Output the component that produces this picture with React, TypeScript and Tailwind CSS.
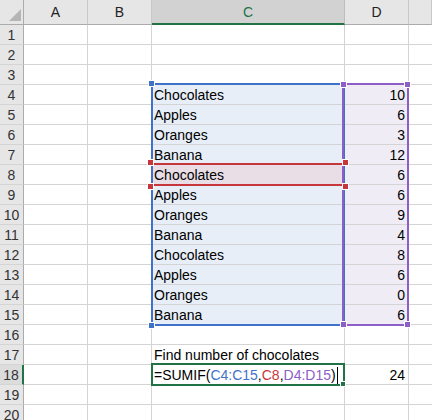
const cols = ["A", "B", "C", "D", ""];
const colW = ["w-[64px]", "w-[64px]", "w-[193px]", "w-[64px]", "flex-1"];

type Cell = { c?: string; d?: string };

const data: Record<number, Cell> = {
  4: { c: "Chocolates", d: "10" },
  5: { c: "Apples", d: "6" },
  6: { c: "Oranges", d: "3" },
  7: { c: "Banana", d: "12" },
  8: { c: "Chocolates", d: "6" },
  9: { c: "Apples", d: "6" },
  10: { c: "Oranges", d: "9" },
  11: { c: "Banana", d: "4" },
  12: { c: "Chocolates", d: "8" },
  13: { c: "Apples", d: "6" },
  14: { c: "Oranges", d: "0" },
  15: { c: "Banana", d: "6" },
  17: { c: "Find number of chocolates" },
  18: { d: "24" },
};

const rows = Array.from({ length: 20 }, (_, i) => i + 1);

// corner squares of a reference box, drawn over its border
function Corners({ color }: { color: string }) {
  const base = "absolute h-[7px] w-[7px] border border-white";
  return (
    <>
      <div className={`${base} -left-[4px] -top-[4px]`} style={{ background: color }} />
      <div className={`${base} -right-[4px] -top-[4px]`} style={{ background: color }} />
      <div className={`${base} -left-[4px] -bottom-[4px]`} style={{ background: color }} />
      <div className={`${base} -right-[4px] -bottom-[4px]`} style={{ background: color }} />
    </>
  );
}

function Formula() {
  return (
    <span className="flex items-center">
      =SUMIF(
      <span className="text-[#3f72c9]">C4:C15</span>,
      <span className="text-[#c8363d]">C8</span>,
      <span className="text-[#8e5ec8]">D4:D15</span>)
      <span className="ml-[1px] inline-block h-[17px] w-px bg-black" />
    </span>
  );
}

export default function App() {
  return (
    <div className="relative h-[420px] w-[432px] overflow-hidden bg-white font-['Liberation_Sans',Arial,sans-serif] text-[14px] text-black">
      {/* column headers */}
      <div className="flex h-[25px] bg-[#e6e6e6]">
        <div className="flex w-[24px] items-end justify-end border-r border-b border-[#ababab] pr-[2px] pb-[3px]">
          <svg width="12" height="12" viewBox="0 0 12 12">
            <polygon points="12,0 12,12 0,12" fill="#b5b5b5" />
          </svg>
        </div>
        {cols.map((c, i) => (
          <div
            key={i}
            className={`${colW[i]} flex items-center justify-center pt-[1px] ${
              c === "C"
                ? "border-b-2 border-b-[#217346] bg-[#d2d2d2] text-[#217346] border-r border-r-[#bdbdbd]"
                : "border-b border-b-[#ababab] border-r border-r-[#c8c8c8] text-[#222]"
            }`}
          >
            {c}
          </div>
        ))}
      </div>

      {rows.map((r) => {
        const cell = data[r] ?? {};
        const inRange = r >= 4 && r <= 15;
        return (
          <div key={r} className="flex h-[20px]">
            <div
              className={`flex w-[24px] items-center justify-center border-b border-b-[#d4d4d4] pt-[1px] text-[#333] ${
                r === 18
                  ? "border-r-2 border-r-[#217346] bg-[#dcdcdc]"
                  : "border-r border-r-[#ababab] bg-[#e6e6e6]"
              }`}
            >
              {r}
            </div>
            <div className="w-[64px] border-r border-b border-[#d4d4d4]" />
            <div className="w-[64px] border-r border-b border-[#d4d4d4]" />
            <div
              className={`flex w-[193px] items-center whitespace-nowrap border-r border-b border-[#d4d4d4] pl-[2px] pt-[1px] ${
                r === 8 ? "bg-[#e9dee6]" : inRange ? "bg-[#e8eef8]" : ""
              }`}
            >
              {r === 18 ? <Formula /> : cell.c}
            </div>
            <div
              className={`flex w-[64px] items-center justify-end border-r border-b border-[#d4d4d4] pr-[3px] pt-[1px] ${
                inRange ? "bg-[#f0ecf6]" : ""
              }`}
            >
              {cell.d}
            </div>
            <div className="flex-1 border-b border-[#d4d4d4]" />
          </div>
        );
      })}

      {/* C8 criteria reference */}
      <div className="absolute left-[151px] top-[163px] h-[23px] w-[194px] border-y-2 border-[#c8363d]" />
      {/* C4:C15 range */}
      <div className="absolute left-[151px] top-[83px] h-[243px] w-[194px] border-2 border-[#3f72c9]" />
      {/* D4:D15 range */}
      <div className="absolute left-[342px] top-[83px] h-[243px] w-[67px] border-2 border-[#8e5ec8]">
        <Corners color="#8e5ec8" />
      </div>
      <div className="absolute left-[148px] top-[80px] h-[249px] w-[198px]">
        <div className="absolute -left-0 top-0 h-[7px] w-[7px] border border-white bg-[#3f72c9]" />
        <div className="absolute bottom-0 left-0 h-[7px] w-[7px] border border-white bg-[#3f72c9]" />
      </div>
      <div className="absolute left-[151px] top-[163px] h-[23px] w-[194px]">
        <Corners color="#c8363d" />
      </div>

      {/* active cell */}
      <div className="absolute left-[151px] top-[363px] h-[23px] w-[194px] border-2 border-[#217346]">
        <div className="absolute -right-[3px] -bottom-[3px] h-[6px] w-[6px] border border-white bg-[#217346]" />
      </div>
    </div>
  );
}
